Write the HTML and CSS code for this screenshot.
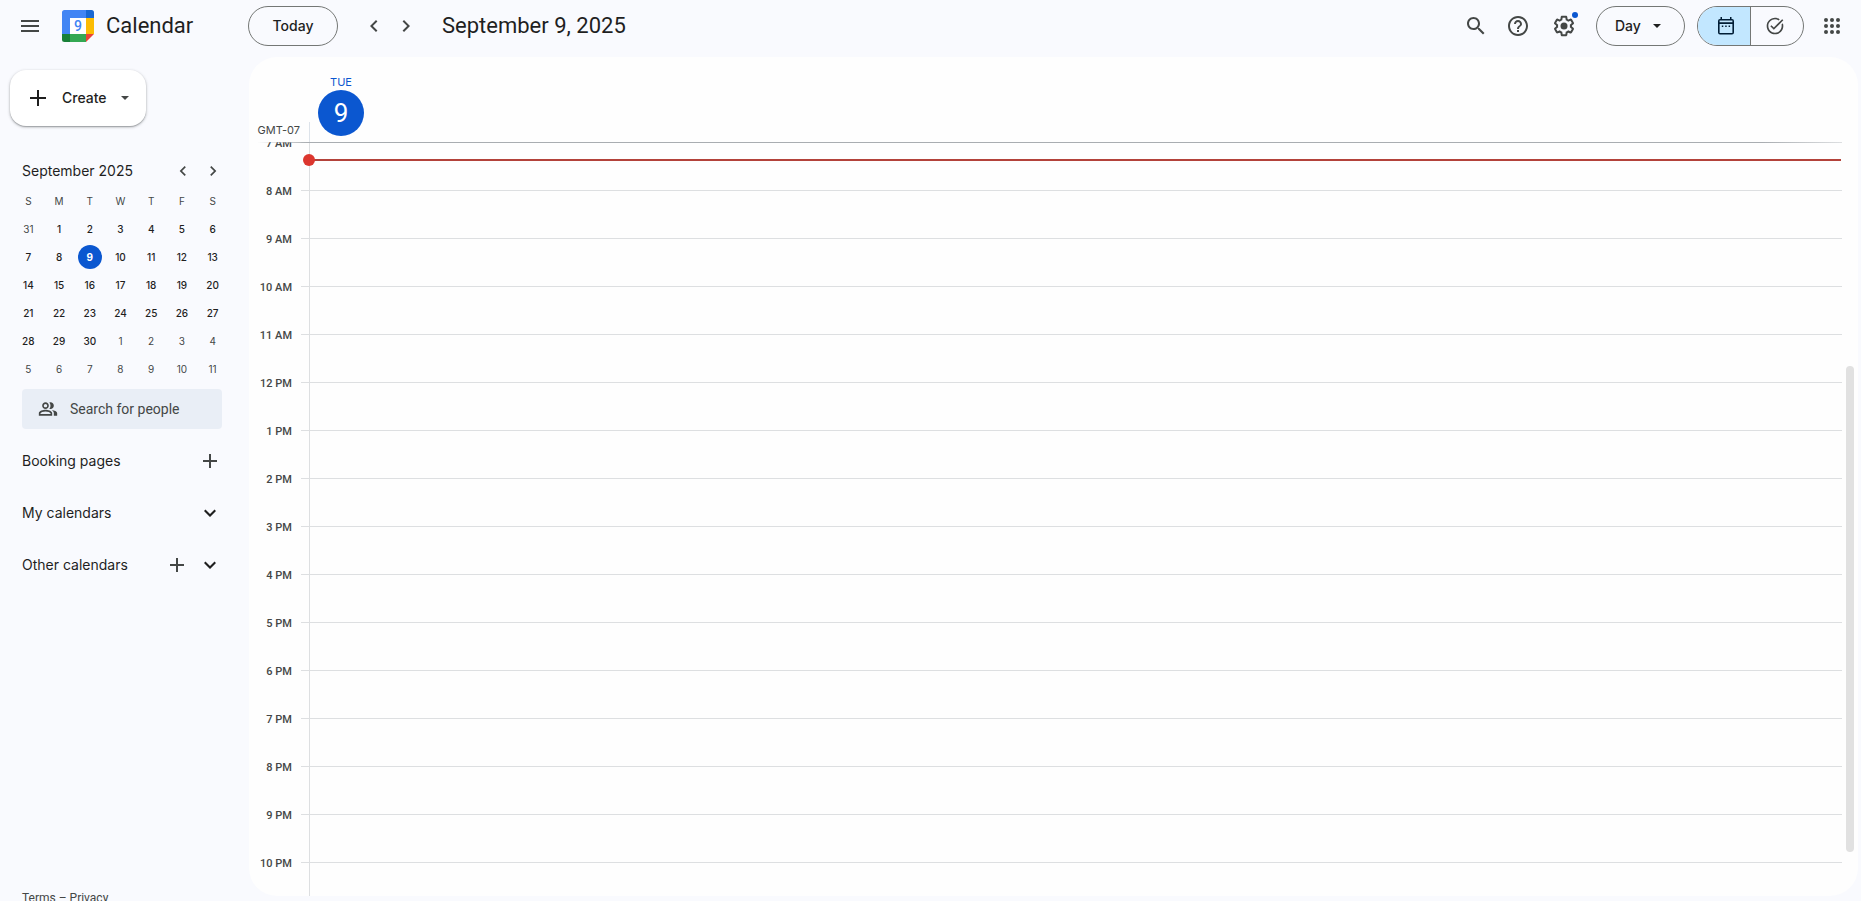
FILE: index.html
```html
<!DOCTYPE html>
<html lang="en">
<head>
<meta charset="utf-8">
<title>Calendar - September 9, 2025</title>
<link rel="stylesheet" href="styles.css">
</head>
<body>
<div class="app">
  <header class="topbar">
    <div class="brand">
      <button class="icon-btn" aria-label="Main menu"><svg class="icon" viewBox="0 0 24 24"><path d="M3 18h18v-2H3v2zm0-5h18v-2H3v2zm0-7v2h18V6H3z"/></svg></button>
      <svg class="logo" viewBox="0 0 32 32" aria-hidden="true">
        <path fill="#4285f4" d="M2.500 0H24v8H8v16H0V2.500A2.500 2.500 0 0 1 2.500 0z"/>
        <path fill="#1967d2" d="M24 0h5.500A2.500 2.500 0 0 1 32 2.500V8h-8z"/>
        <path fill="#fbbc04" d="M24 8h8v16h-8z"/>
        <path fill="#34a853" d="M8 24h16v8H8z"/>
        <path fill="#188038" d="M0 24h8v8H2.500A2.500 2.500 0 0 1 0 29.500z"/>
        <path fill="#ea4335" d="M24 24h8l-8 8z"/>
        <path fill="#fff" d="M8 8h16v16H8z"/>
        <text class="logo-day" x="16" y="21" text-anchor="middle">9</text>
      </svg>
      <span class="brand-name">Calendar</span>
    </div>
    <button class="pill today">Today</button>
    <nav class="pager" aria-label="Change day">
      <button class="icon-btn" aria-label="Previous day"><svg class="icon" viewBox="0 0 24 24"><path d="M15.410 7.410 14 6l-6 6 6 6 1.410-1.410L10.830 12z"/></svg></button>
      <button class="icon-btn" aria-label="Next day"><svg class="icon" viewBox="0 0 24 24"><path d="M10 6 8.590 7.410 13.170 12l-4.580 4.590L10 18l6-6z"/></svg></button>
    </nav>
    <h1 class="date-title">September 9, 2025</h1>
    <div class="tools">
      <button class="icon-btn search" aria-label="Search"><svg class="icon" viewBox="0 0 24 24"><path d="M15.500 14h-.79l-.28-.27C15.410 12.590 16 11.110 16 9.500 16 5.910 13.090 3 9.500 3S3 5.910 3 9.500 5.910 16 9.500 16c1.610 0 3.090-.59 4.230-1.570l.27.28v.79l5 4.990L20.490 19l-4.990-5zm-6 0C7.010 14 5 11.990 5 9.500S7.010 5 9.500 5 14 7.010 14 9.500 11.990 14 9.500 14z"/></svg></button>
      <button class="icon-btn help" aria-label="Support"><svg class="icon" viewBox="0 0 24 24"><path d="M11 18h2v-2h-2v2zm1-16C6.480 2 2 6.480 2 12s4.480 10 10 10 10-4.480 10-10S17.520 2 12 2zm0 18c-4.410 0-8-3.590-8-8s3.590-8 8-8 8 3.590 8 8-3.590 8-8 8zm0-14c-2.210 0-4 1.790-4 4h2c0-1.100.9-2 2-2s2 .9 2 2c0 2-3 1.750-3 5h2c0-2.250 3-2.500 3-5 0-2.210-1.790-4-4-4z"/></svg></button>
      <button class="icon-btn settings" aria-label="Settings"><svg class="icon" viewBox="0 0 24 24"><path d="M13.850 22.250h-3.700c-.74 0-1.360-.54-1.450-1.270l-.27-1.890c-.27-.14-.53-.29-.79-.46l-1.800.72c-.7.26-1.470-.03-1.810-.65L2.200 15.530c-.35-.66-.2-1.440.36-1.880l1.530-1.190c-.01-.15-.02-.3-.02-.46 0-.15.01-.31.02-.46l-1.520-1.190c-.59-.45-.74-1.260-.37-1.880l1.850-3.190c.34-.62 1.110-.9 1.790-.63l1.810.73c.26-.17.52-.32.78-.46l.27-1.910c.09-.7.71-1.250 1.440-1.250h3.700c.74 0 1.360.54 1.450 1.270l.27 1.890c.27.14.53.29.79.46l1.800-.72c.71-.26 1.480.03 1.820.65l1.840 3.180c.36.66.2 1.440-.36 1.880l-1.520 1.190c.01.15.02.3.02.46s-.01.31-.02.46l1.520 1.190c.56.45.72 1.230.37 1.860l-1.860 3.220c-.34.62-1.110.9-1.800.63l-1.800-.72c-.26.17-.52.32-.78.46l-.27 1.910c-.1.68-.72 1.220-1.460 1.220zm-3.230-2h2.760l.37-2.550.53-.22c.44-.18.88-.44 1.340-.78l.45-.34 2.380.96 1.380-2.400-2.030-1.580.07-.56c.03-.26.06-.51.06-.78s-.03-.53-.06-.78l-.07-.56 2.030-1.580-1.390-2.400-2.390.96-.45-.35c-.42-.32-.87-.58-1.330-.77l-.52-.22-.37-2.550h-2.760l-.37 2.550-.53.21c-.44.19-.88.44-1.340.79l-.45.33-2.380-.95-1.390 2.390 2.030 1.580-.07.56a7 7 0 0 0-.06.79c0 .26.02.53.06.78l.07.56-2.030 1.580 1.380 2.400 2.390-.96.45.35c.43.33.86.58 1.330.77l.53.22z"/><circle cx="12" cy="12" r="3.500"/></svg><span class="notice-dot"></span></button>
      <div class="pill view-picker">
        <select class="view-select" aria-label="View"><option>Day</option><option>Week</option><option>Month</option><option>Year</option></select>
        <svg class="caret" viewBox="0 0 8 4" aria-hidden="true"><path d="M0 0h8L4 4z"/></svg>
      </div>
      <div class="mode-toggle">
        <button class="mode active" aria-label="Calendar" aria-pressed="true"><svg class="mode-icon" viewBox="0 0 20 20"><path fill-rule="evenodd" d="M4.500 1H6v2h8V1h1.500v2h.500a2 2 0 0 1 2 2v11.500a2 2 0 0 1-2 2H4a2 2 0 0 1-2-2V5a2 2 0 0 1 2-2h.500zM3.600 8v8.900h12.800V8zm0-3.400v1.700h12.800V4.600z"/><path d="M5.800 9.600h1.500v1.500H5.800zm3.400 0h1.500v1.500H9.200zm3.400 0h1.500v1.500h-1.500z"/></svg></button>
        <button class="mode" aria-label="Tasks" aria-pressed="false"><svg class="mode-icon" viewBox="0 0 24 24"><path d="M22 5.180 10.590 16.600l-4.240-4.240 1.410-1.410 2.830 2.830 10-10L22 5.180zm-2.210 5.040c.13.57.21 1.170.21 1.780 0 4.420-3.580 8-8 8s-8-3.580-8-8 3.580-8 8-8c1.580 0 3.040.46 4.280 1.250l1.440-1.440C16.100 2.670 14.130 2 12 2 6.480 2 2 6.480 2 12s4.480 10 10 10 10-4.480 10-10c0-1.190-.22-2.330-.6-3.390l-1.610 1.610z"/></svg></button>
      </div>
      <button class="icon-btn" aria-label="Google apps"><svg class="icon" viewBox="0 0 24 24"><circle cx="6" cy="6" r="2"/><circle cx="12" cy="6" r="2"/><circle cx="18" cy="6" r="2"/><circle cx="6" cy="12" r="2"/><circle cx="12" cy="12" r="2"/><circle cx="18" cy="12" r="2"/><circle cx="6" cy="18" r="2"/><circle cx="12" cy="18" r="2"/><circle cx="18" cy="18" r="2"/></svg></button>
    </div>
  </header>

  <div class="content">
    <aside class="sidebar">
      <button class="create"><svg class="create-plus" viewBox="0 0 16 16"><path d="M7 0h2v7h7v2H9v7H7V9H0V7h7z"/></svg>Create<svg class="caret" viewBox="0 0 8 4"><path d="M0 0h8L4 4z"/></svg></button>

      <section class="mini">
        <div class="mini-head">
          <h2 class="side-title">September 2025</h2>
          <button class="mini-btn" aria-label="Previous month"><svg class="icon-sm" viewBox="0 0 24 24"><path d="M15.410 7.410 14 6l-6 6 6 6 1.410-1.410L10.830 12z"/></svg></button>
          <button class="mini-btn" aria-label="Next month"><svg class="icon-sm" viewBox="0 0 24 24"><path d="M10 6 8.590 7.410 13.170 12l-4.580 4.590L10 18l6-6z"/></svg></button>
        </div>
        <table class="month">
          <thead><tr><th>S</th><th>M</th><th>T</th><th>W</th><th>T</th><th>F</th><th>S</th></tr></thead>
          <tbody>
            <tr><td class="other">31</td><td>1</td><td>2</td><td>3</td><td>4</td><td>5</td><td>6</td></tr>
            <tr><td>7</td><td>8</td><td><span class="current">9</span></td><td>10</td><td>11</td><td>12</td><td>13</td></tr>
            <tr><td>14</td><td>15</td><td>16</td><td>17</td><td>18</td><td>19</td><td>20</td></tr>
            <tr><td>21</td><td>22</td><td>23</td><td>24</td><td>25</td><td>26</td><td>27</td></tr>
            <tr><td>28</td><td>29</td><td>30</td><td class="other">1</td><td class="other">2</td><td class="other">3</td><td class="other">4</td></tr>
            <tr><td class="other">5</td><td class="other">6</td><td class="other">7</td><td class="other">8</td><td class="other">9</td><td class="other">10</td><td class="other">11</td></tr>
          </tbody>
        </table>
      </section>

      <label class="people">
        <svg class="icon-sm" viewBox="0 0 24 24" aria-hidden="true"><path d="M16.670 13.130C18.040 14.060 19 15.320 19 17v3h4v-3c0-2.180-3.570-3.470-6.330-3.870zM15 12c2.210 0 4-1.790 4-4s-1.790-4-4-4c-.47 0-.91.1-1.330.24C14.500 5.270 15 6.580 15 8s-.5 2.730-1.330 3.760c.42.14.86.24 1.330.24zM9 12c2.210 0 4-1.790 4-4s-1.790-4-4-4-4 1.790-4 4 1.790 4 4 4zm0-6c1.100 0 2 .9 2 2s-.9 2-2 2-2-.9-2-2 .9-2 2-2zM9 13c-2.670 0-8 1.340-8 4v3h16v-3c0-2.660-5.330-4-8-4zm6 5H3v-.99C3.200 16.290 6.300 15 9 15s5.800 1.290 6 2v1z"/></svg>
        <input class="people-input" type="text" placeholder="Search for people" aria-label="Search for people">
      </label>

      <div class="group">
        <h2 class="side-title">Booking pages</h2>
        <button class="group-btn" aria-label="Create booking page"><svg class="icon-sm add" viewBox="0 0 20 20"><path d="M9 3h2v6h6v2h-6v6H9v-6H3V9h6z"/></svg></button>
      </div>
      <div class="group">
        <h2 class="side-title">My calendars</h2>
        <button class="group-btn" aria-label="Expand my calendars"><svg class="icon-sm" viewBox="0 0 20 20"><path d="m4 8.100 1.500-1.500 4.500 4.500 4.500-4.500L16 8.100l-6 6z"/></svg></button>
      </div>
      <div class="group">
        <h2 class="side-title">Other calendars</h2>
        <button class="group-btn" aria-label="Add other calendars"><svg class="icon-sm add" viewBox="0 0 20 20"><path d="M9 3h2v6h6v2h-6v6H9v-6H3V9h6z"/></svg></button>
        <button class="group-btn" aria-label="Expand other calendars"><svg class="icon-sm" viewBox="0 0 20 20"><path d="m4 8.100 1.500-1.500 4.500 4.500 4.500-4.500L16 8.100l-6 6z"/></svg></button>
      </div>

      <footer class="legal"><a href="#terms">Terms</a> – <a href="#privacy">Privacy</a></footer>
    </aside>

    <main class="card">
      <div class="day-head">
        <div class="zone">GMT-07</div>
        <div class="day-label"><span class="weekday">TUE</span><button class="day-number">9</button></div>
      </div>
      <div class="scroll-area">
        <div class="hours">
          <div class="hour"><span class="hour-label">7 AM</span><div class="tick"></div><div class="slot"><div class="now"></div></div></div>
          <div class="hour"><span class="hour-label">8 AM</span><div class="tick"></div><div class="slot"></div></div>
          <div class="hour"><span class="hour-label">9 AM</span><div class="tick"></div><div class="slot"></div></div>
          <div class="hour"><span class="hour-label">10 AM</span><div class="tick"></div><div class="slot"></div></div>
          <div class="hour"><span class="hour-label">11 AM</span><div class="tick"></div><div class="slot"></div></div>
          <div class="hour"><span class="hour-label">12 PM</span><div class="tick"></div><div class="slot"></div></div>
          <div class="hour"><span class="hour-label">1 PM</span><div class="tick"></div><div class="slot"></div></div>
          <div class="hour"><span class="hour-label">2 PM</span><div class="tick"></div><div class="slot"></div></div>
          <div class="hour"><span class="hour-label">3 PM</span><div class="tick"></div><div class="slot"></div></div>
          <div class="hour"><span class="hour-label">4 PM</span><div class="tick"></div><div class="slot"></div></div>
          <div class="hour"><span class="hour-label">5 PM</span><div class="tick"></div><div class="slot"></div></div>
          <div class="hour"><span class="hour-label">6 PM</span><div class="tick"></div><div class="slot"></div></div>
          <div class="hour"><span class="hour-label">7 PM</span><div class="tick"></div><div class="slot"></div></div>
          <div class="hour"><span class="hour-label">8 PM</span><div class="tick"></div><div class="slot"></div></div>
          <div class="hour"><span class="hour-label">9 PM</span><div class="tick"></div><div class="slot"></div></div>
          <div class="hour"><span class="hour-label">10 PM</span><div class="tick"></div><div class="slot"></div></div>
        </div>
        <div class="track"><div class="thumb"></div></div>
      </div>
    </main>
  </div>
</div>
</body>
</html>
```

FILE: styles.css
```css
* {
  box-sizing: border-box;
}

body {
  margin: 0;
  background: #f9fafe;
  color: #1f1f1f;
  font-family: Inter, Roboto, "Liberation Sans", sans-serif;
  font-size: 14px;
  line-height: 20px;
}

button,
select,
input {
  margin: 0;
  padding: 0;
  border: 0;
  background: none;
  color: inherit;
  font: inherit;
}

button {
  cursor: pointer;
}

svg {
  display: block;
  flex: none;
  fill: currentColor;
}

h1,
h2 {
  margin: 0;
  font-weight: 400;
}

.app {
  display: flex;
  flex-direction: column;
  height: 100vh;
  overflow: hidden;
}

/* Top bar */

.topbar {
  display: flex;
  align-items: center;
  flex: none;
  padding: 6px 17px 11px 0;
}

.brand {
  display: flex;
  align-items: center;
  flex: none;
  width: 248px;
  padding-left: 18px;
}

.icon-btn {
  position: relative;
  flex: none;
  color: #444746;
}

.icon {
  width: 24px;
  height: 24px;
}

.logo {
  width: 32px;
  height: 32px;
  margin: 0 12px 0 20px;
}

.logo-day {
  fill: #4285f4;
  font-family: Roboto, sans-serif;
  font-size: 14px;
  font-weight: 500;
}

.brand-name,
.date-title {
  font-family: Roboto, "Liberation Sans", sans-serif;
  font-size: 22px;
  line-height: 28px;
  white-space: nowrap;
}

.pill {
  height: 40px;
  border: 1px solid #747775;
  border-radius: 20px;
  font-weight: 500;
}

.today {
  width: 90px;
}

.pager {
  display: flex;
  gap: 8px;
  margin: 0 24px;
}

.tools {
  display: flex;
  align-items: center;
  margin-left: auto;
}

.search {
  margin-right: 18px;
}

.help {
  margin-right: 22px;
}

.settings {
  margin-right: 20px;
}

.notice-dot {
  position: absolute;
  top: -2px;
  right: -2px;
  width: 6px;
  height: 6px;
  border-radius: 50%;
  background: #0b57d0;
}

.view-picker {
  position: relative;
  width: 89px;
  margin-right: 12px;
}

.view-select {
  width: 100%;
  height: 100%;
  padding-left: 18px;
  border-radius: 20px;
  appearance: none;
}

.caret {
  width: 8px;
  height: 4px;
}

.view-picker .caret {
  position: absolute;
  top: 17px;
  right: 23px;
  pointer-events: none;
}

.mode-toggle {
  display: flex;
  width: 107px;
  height: 40px;
  margin-right: 16px;
  border: 1px solid #747775;
  border-radius: 20px;
  overflow: hidden;
}

.mode {
  display: flex;
  flex: 1;
  align-items: center;
  justify-content: center;
  padding-right: 4px;
  color: #444746;
}

.mode.active {
  padding: 0 0 0 4px;
  border-right: 1px solid #747775;
  background: #c2e7ff;
  color: #001d35;
}

.mode-icon {
  width: 20px;
  height: 20px;
}

/* Sidebar */

.content {
  display: flex;
  flex: 1;
  min-height: 0;
}

.sidebar {
  display: flex;
  flex: none;
  flex-direction: column;
  width: 249px;
  padding: 13px 27px 0 22px;
}

.create {
  display: flex;
  flex: none;
  align-items: center;
  width: 136px;
  height: 56px;
  margin-left: -12px;
  padding-left: 20px;
  border-radius: 16px;
  background: #fff;
  box-shadow: 0 1px 3px rgba(60, 64, 67, 0.4), 0 1px 1px rgba(60, 64, 67, 0.25);
  font-weight: 500;
}

.create-plus {
  width: 16px;
  height: 16px;
  margin-right: 16px;
}

.create .caret {
  margin-left: 14px;
  color: #444746;
}

.mini {
  margin: 33px -6px 0 -9px;
}

.mini-head {
  display: flex;
  align-items: center;
  height: 24px;
  padding: 0 5px 0 9px;
}

.side-title {
  flex: 1;
  font-size: 14px;
  font-weight: 400;
  line-height: 20px;
  white-space: nowrap;
}

.icon-sm {
  width: 20px;
  height: 20px;
}

.mini-btn {
  margin-left: 10px;
  color: #444746;
}

.month {
  width: 100%;
  margin-top: 4px;
  border-collapse: collapse;
  table-layout: fixed;
  font-size: 10px;
  line-height: 24px;
  text-align: center;
}

.month th,
.month td {
  height: 28px;
  padding: 0;
  font-weight: 500;
}

.month th,
.month .other {
  color: #444746;
  font-weight: 400;
}

.current {
  display: block;
  width: 24px;
  height: 24px;
  margin: 0 auto;
  border-radius: 50%;
  background: #0b57d0;
  color: #fff;
  font-weight: 700;
}

.people {
  display: flex;
  flex: none;
  align-items: center;
  gap: 12px;
  height: 40px;
  margin: 6px 0;
  padding-left: 16px;
  border-radius: 4px;
  background: #e9eef6;
  color: #444746;
}

.people-input {
  flex: 1;
  min-width: 0;
  outline: 0;
  font-family: Roboto, sans-serif;
}

.people-input::placeholder {
  color: #444746;
  opacity: 1;
}

.group {
  display: flex;
  flex: none;
  align-items: center;
  height: 52px;
  padding-right: 2px;
}

.group-btn {
  margin-left: 13px;
}

.group-btn .add {
  color: #444746;
}

.legal {
  margin: auto 0 -5px;
  color: #444746;
  font-family: Roboto, sans-serif;
  font-size: 12px;
  line-height: 16px;
}

.legal a {
  color: inherit;
  text-decoration: none;
}

/* Day view */

.card {
  display: flex;
  flex: 1;
  flex-direction: column;
  min-width: 0;
  margin: 0 3px 5px 0;
  border-radius: 28px;
  background: #fefefe;
  overflow: hidden;
}

.day-head {
  position: relative;
  display: flex;
  flex: none;
  align-items: flex-end;
  height: 85px;
}

.day-head::after {
  content: "";
  position: absolute;
  z-index: 1;
  right: 16px;
  bottom: -1px;
  left: 8px;
  height: 1px;
  background: linear-gradient(to right, transparent, #a9adb1 52px, #a9adb1 calc(100% - 80px), transparent);
}

.zone {
  width: 61px;
  height: 20px;
  padding-right: 9px;
  border-right: 1px solid #dde3ea;
  color: #444746;
  font-size: 11px;
  line-height: 16px;
  text-align: right;
}

.day-label {
  display: flex;
  flex-direction: column;
  align-items: center;
  width: 46px;
  margin: 0 8px 6px;
}

.weekday {
  color: #0b57d0;
  font-size: 11px;
  line-height: 16px;
}

.day-number {
  width: 46px;
  height: 46px;
  border-radius: 50%;
  background: #0b57d0;
  color: #fff;
  font-family: Roboto, sans-serif;
  font-size: 26px;
}

.scroll-area {
  display: flex;
  flex: 1;
  min-height: 0;
}

.hours {
  flex: 1;
  min-width: 0;
  overflow: hidden;
}

.hour {
  display: flex;
  height: 48px;
}

.hour-label {
  width: 52px;
  margin-top: -6px;
  padding-right: 9px;
  color: #444746;
  font-family: Roboto, sans-serif;
  font-size: 11px;
  font-weight: 500;
  line-height: 16px;
  text-align: right;
}

.tick {
  width: 8px;
  border-top: 1px solid #dddfe1;
}

.slot {
  position: relative;
  flex: 1;
  border-top: 1px solid #dddfe1;
  border-left: 1px solid #dddfe1;
}

.now {
  position: absolute;
  top: 16px;
  right: 1px;
  left: 0;
  height: 2px;
  background: #b3423a;
}

.now::before {
  content: "";
  position: absolute;
  top: -5px;
  left: -7px;
  width: 12px;
  height: 12px;
  border-radius: 50%;
  background: #dc362e;
}

.track {
  flex: none;
  width: 16px;
  padding: 0 4px;
}

.thumb {
  height: 64.500%;
  margin-top: 224px;
  border-radius: 4px;
  background: #e1e1e1;
}
```
